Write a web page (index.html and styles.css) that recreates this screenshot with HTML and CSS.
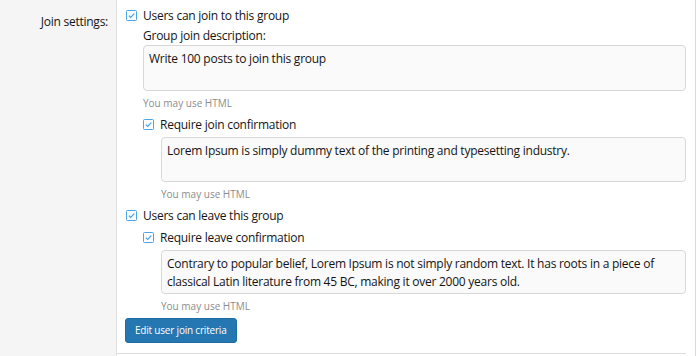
FILE: index.html
```html
<!DOCTYPE html>
<html lang="en">
<head>
<meta charset="utf-8">
<title>Join settings</title>
<link rel="stylesheet" href="styles.css">
</head>
<body>
<div class="page">
  <div class="form-row">
    <div class="label-col">Join settings:</div>
    <div class="control-col">
      <div class="check-row lvl1">
        <span class="box"><svg viewBox="0 0 11 11" width="11" height="11"><rect x="0.5" y="0.5" width="10" height="10" rx="1" fill="#fff" stroke="#4aa3e4"/><polyline points="2.8,5.6 4.7,7.4 8.3,3.6" fill="none" stroke="#4aa3e4" stroke-width="1.3"/></svg></span>
        <span>Users can join to this group</span>
      </div>
      <div class="sub">
        <div class="field-label">Group join description:</div>
        <div class="textarea tall">Write 100 posts to join this group</div>
        <div class="hint">You may use HTML</div>
        <div class="check-row lvl2">
          <span class="box"><svg viewBox="0 0 11 11" width="11" height="11"><rect x="0.5" y="0.5" width="10" height="10" rx="1" fill="#fff" stroke="#4aa3e4"/><polyline points="2.8,5.6 4.7,7.4 8.3,3.6" fill="none" stroke="#4aa3e4" stroke-width="1.3"/></svg></span>
          <span>Require join confirmation</span>
        </div>
        <div class="sub">
          <div class="textarea mid">Lorem Ipsum is simply dummy text of the printing and typesetting industry.</div>
          <div class="hint">You may use HTML</div>
        </div>
      </div>
      <div class="check-row lvl1 gap">
        <span class="box"><svg viewBox="0 0 11 11" width="11" height="11"><rect x="0.5" y="0.5" width="10" height="10" rx="1" fill="#fff" stroke="#4aa3e4"/><polyline points="2.8,5.6 4.7,7.4 8.3,3.6" fill="none" stroke="#4aa3e4" stroke-width="1.3"/></svg></span>
        <span>Users can leave this group</span>
      </div>
      <div class="sub">
        <div class="check-row lvl2 tight">
          <span class="box"><svg viewBox="0 0 11 11" width="11" height="11"><rect x="0.5" y="0.5" width="10" height="10" rx="1" fill="#fff" stroke="#4aa3e4"/><polyline points="2.8,5.6 4.7,7.4 8.3,3.6" fill="none" stroke="#4aa3e4" stroke-width="1.3"/></svg></span>
          <span>Require leave confirmation</span>
        </div>
        <div class="sub">
          <div class="textarea">Contrary to popular belief, Lorem Ipsum is not simply random text. It has roots in a piece of classical Latin literature from 45 BC, making it over 2000 years old.</div>
          <div class="hint">You may use HTML</div>
        </div>
      </div>
      <button class="btn" type="button">Edit user join criteria</button>
    </div>
  </div>
</div>
</body>
</html>
```
FILE: styles.css
```css
html, body {
  margin: 0;
  padding: 0;
  background: #fff;
}
body {
  font-family: "Open Sans", "Noto Sans", sans-serif;
  font-size: 12px;
  letter-spacing: -0.25px;
  color: #141414;
}
.page {
  width: 695px;
  height: 356px;
  border-right: 1px solid #dadada;
  overflow: hidden;
}
.form-row {
  display: flex;
  height: 356px;
  align-items: flex-start;
}
.label-col {
  width: 117px;
  align-self: stretch;
  box-sizing: border-box;
  background: #f5f5f5;
  border-right: 1px solid #dfdfdf;
  text-align: right;
  padding: 12px 8px 0 0;
  line-height: 19px;
  flex-shrink: 0;
}
.control-col {
  flex: 1;
  margin-right: 9px;
  padding: 6px 0 10px 9px;
  border-bottom: 1px solid #dcdcdc;
  display: flex;
  flex-direction: column;
  align-items: stretch;
}
.check-row {
  display: flex;
  align-items: center;
  line-height: 19px;
}
.check-row .box {
  width: 11px;
  height: 11px;
  margin-right: 6px;
  display: flex;
  flex-shrink: 0;
  margin-top: -1px;
}
.check-row.lvl2 {
  margin-top: 4px;
}
.check-row.lvl2.tight {
  margin-top: 3px;
}
.check-row.lvl1.gap {
  margin-top: 4px;
}
.sub {
  margin-left: 17px;
  display: flex;
  flex-direction: column;
}
.sub .sub {
  margin-left: 18px;
}
.field-label {
  line-height: 19px;
  margin-top: 1px;
}
.textarea {
  box-sizing: border-box;
  background: #fafafa;
  border: 1px solid #d8d8d8;
  border-radius: 4px;
  padding: 4px 6px 2px 5px;
  line-height: 18px;
  min-height: 44px;
}
.textarea.tall {
  min-height: 46px;
}
.textarea.mid {
  min-height: 45px;
}
.check-row + .sub > .textarea:first-child {
  margin-top: 3px;
}
.hint {
  font-size: 10px;
  letter-spacing: 0;
  line-height: 16px;
  color: #8c8c8c;
  margin-top: 4px;
}
.btn {
  align-self: flex-start;
  margin-top: 4px;
  margin-left: -1px;
  height: 25px;
  padding: 0 9px;
  border: 1px solid #1f6ca3;
  border-radius: 3px;
  background: #2577b1;
  color: #fff;
  font-family: "Open Sans", "Noto Sans", sans-serif;
  font-size: 10px;
  letter-spacing: -0.2px;
  line-height: 23px;
}
```
